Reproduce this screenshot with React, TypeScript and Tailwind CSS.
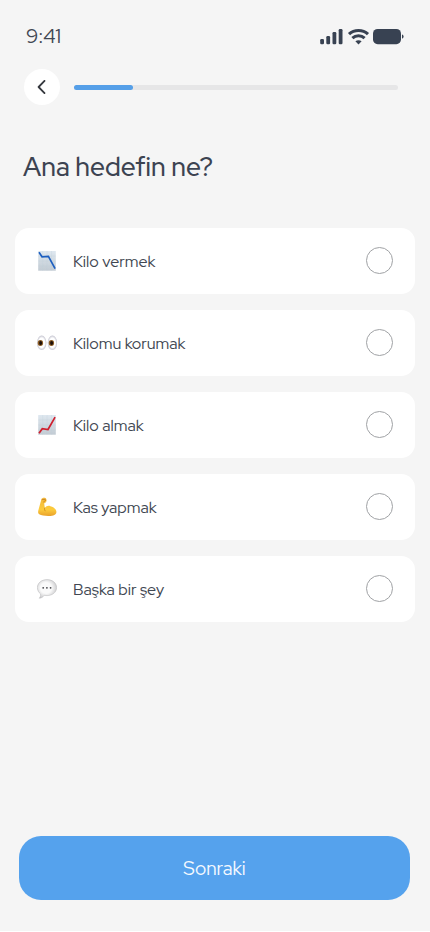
import { ReactNode } from "react";

const goals: { label: string; icon: ReactNode }[] = [
  { label: "Kilo vermek", icon: <ChartDownIcon /> },
  { label: "Kilomu korumak", icon: <EyesIcon /> },
  { label: "Kilo almak", icon: <ChartUpIcon /> },
  { label: "Kas yapmak", icon: <BicepsIcon /> },
  { label: "Başka bir şey", icon: <SpeechIcon /> },
];

function ChartBackdrop({ id }: { id: string }) {
  return (
    <>
      <defs>
        <linearGradient id={id} x1="0" y1="0" x2="0" y2="1">
          <stop offset="0" stopColor="#dfe8f0" />
          <stop offset="1" stopColor="#c2cbd3" />
        </linearGradient>
      </defs>
      <rect x="1.2" y="1" width="17.6" height="19.7" fill={`url(#${id})`} />
      <path
        d="M5.7 1v19.7M10.1 1v19.7M14.5 1v19.7M1.2 6h17.6M1.2 11h17.6M1.2 16h17.6"
        stroke="#b9cbd9"
        strokeWidth="0.4"
        opacity="0.6"
      />
    </>
  );
}

function ChartDownIcon() {
  return (
    <svg width="20" height="22" viewBox="0 0 20 22" fill="none">
      <ChartBackdrop id="chart-down" />
      <path
        d="m2 2.2 3 4.6 6.4-.5 6.7 12.4"
        stroke="#1d5fc0"
        strokeWidth="1.7"
      />
    </svg>
  );
}

function ChartUpIcon() {
  return (
    <svg width="20" height="22" viewBox="0 0 20 22" fill="none">
      <ChartBackdrop id="chart-up" />
      <path
        d="m2 19.3 3.3-4.6 5.7.8 7.1-12.3"
        stroke="#cf1f2e"
        strokeWidth="1.7"
      />
    </svg>
  );
}

function EyesIcon() {
  return (
    <svg width="20" height="22" viewBox="0 0 20 22" fill="none">
      <defs>
        <radialGradient id="eye-white">
          <stop offset="0.65" stopColor="#ffffff" />
          <stop offset="1" stopColor="#c2c2ce" />
        </radialGradient>
      </defs>
      <ellipse cx="4.7" cy="10.8" rx="4.7" ry="7.3" fill="url(#eye-white)" />
      <ellipse cx="15.4" cy="10.8" rx="4.7" ry="7.3" fill="url(#eye-white)" />
      <ellipse cx="3.4" cy="11" rx="2.7" ry="3" fill="#8a5a22" />
      <ellipse cx="14.4" cy="11" rx="2.7" ry="3" fill="#8a5a22" />
      <ellipse cx="3.6" cy="11" rx="1.5" ry="1.9" fill="#1c0f08" />
      <ellipse cx="14.6" cy="11" rx="1.5" ry="1.9" fill="#1c0f08" />
    </svg>
  );
}

function BicepsIcon() {
  return (
    <svg width="20" height="22" viewBox="0 0 20 22" fill="none">
      <defs>
        <linearGradient id="biceps" x1="0" y1="0" x2="0" y2="1">
          <stop offset="0" stopColor="#f2b83c" />
          <stop offset="0.65" stopColor="#fccb3c" />
          <stop offset="1" stopColor="#e9a22c" />
        </linearGradient>
      </defs>
      <path
        d="M4.4 3.2C5 1.7 7.1 1.3 8.5 2.1c1 .6 1.3 2 .9 3.2-.3 1-1 1.8-2.200 1.900l.6 4.800c1.500-2 3.700-2.700 5.600-1.800 2.800.4 5.900 2.900 6 5.600.1 2.900-3.100 4-7.200 4.100-4 .1-7.800-.4-10-1.700-1.200-.7-1.200-2.100-.9-3.700Z"
        fill="url(#biceps)"
      />
      <path
        d="M7.6 12c-.3 1.1 0 2 .5 2.8M5.2 3.6l3.1-.2M8.7 4.3 6.500 6"
        stroke="#bf751d"
        strokeWidth="0.7"
        strokeLinecap="round"
      />
    </svg>
  );
}

function SpeechIcon() {
  return (
    <svg width="20" height="22" viewBox="0 0 20 22" fill="none">
      <defs>
        <radialGradient id="speech" cx="0.45" cy="0.45" r="0.58">
          <stop offset="0.5" stopColor="#fafafa" />
          <stop offset="1" stopColor="#c9c9cb" />
        </radialGradient>
      </defs>
      <path
        d="M10 1.6c5.4 0 9.6 3.4 9.6 8s-4.2 8-9.6 8c-1 0-1.9-.1-2.8-.3-1.100 1.700-2.800 2.900-5 2.900 1.200-1.100 1.600-2.600 1.400-4.200C1.600 14.500.4 12.200.4 9.600.4 5 4.600 1.600 10 1.600Z"
        fill="url(#speech)"
        stroke="#b4b4b6"
        strokeWidth="0.5"
      />
      <circle cx="6.2" cy="9.8" r="0.9" fill="#45454a" />
      <circle cx="9.9" cy="9.8" r="0.9" fill="#45454a" />
      <circle cx="13.6" cy="9.8" r="0.9" fill="#45454a" />
    </svg>
  );
}

function StatusIcons() {
  return (
    <svg width="84" height="18" viewBox="0 0 84 18" fill="none">
      <g fill="#384252">
        <rect x="0.2" y="11" width="3.8" height="5.2" rx="1.2" />
        <rect x="6.3" y="8" width="3.8" height="8.2" rx="1.2" />
        <rect x="12.5" y="4" width="3.8" height="12.2" rx="1.2" />
        <rect x="18.7" y="1" width="3.8" height="15.2" rx="1.2" />
        <path d="m38.5 16.4-3.1-3.1c1.7-1.5 4.5-1.5 6.2 0Z" />
        <rect x="53" y="1" width="28" height="15.2" rx="4.6" />
        <path d="M82 6.5c1.100.3 1.600 1.100 1.600 2.100s-.5 1.800-1.600 2.100Z" />
      </g>
      <path
        d="M29 6.2c5.3-5 13.7-5 19 0M32.4 10.1c3.4-3.2 8.8-3.2 12.2 0"
        stroke="#384252"
        strokeWidth="3.1"
      />
    </svg>
  );
}

function GoalOption({ label, icon }: { label: string; icon: ReactNode }) {
  return (
    <button
      type="button"
      className="flex h-[66px] w-full items-center rounded-[14px] bg-white px-[22px] text-left"
    >
      {icon}
      <span className="mt-px ml-4 flex-1 whitespace-nowrap text-[16px] text-[#414752]">
        {label}
      </span>
      <span className="mb-px size-[27px] rounded-full border border-[#a0a2a5]" />
    </button>
  );
}

export default function App() {
  return (
    <div className="h-[932px] w-[430px] bg-white">
      <main className="flex h-[931px] flex-col bg-[#f5f5f5] font-['Red_Hat_Display','Lato',sans-serif]">
        <div className="flex h-[69px] shrink-0 items-start justify-between px-[26px] pt-[28px]">
          <span className="text-[20px] leading-[17px] text-[#414752]">
            9:41
          </span>
          <StatusIcons />
        </div>

        <div className="flex h-9 shrink-0 items-center pr-8 pl-6">
          <button
            type="button"
            aria-label="Geri"
            className="flex size-9 items-center justify-center rounded-full bg-white"
          >
            <svg width="10" height="14" viewBox="0 0 10 14" fill="none">
              <path
                d="M7.5.9 1.6 7l5.9 6.1"
                stroke="#35383e"
                strokeWidth="1.8"
                strokeLinecap="round"
                strokeLinejoin="round"
              />
            </svg>
          </button>
          <div className="ml-3.5 h-[5px] flex-1 rounded-full bg-[#e6e6e7]">
            <div className="h-full w-[59px] rounded-full bg-[#559fe8]" />
          </div>
        </div>

        <h1 className="mt-[44px] ml-[23px] text-[26.4px] leading-9 font-medium whitespace-nowrap text-[#3c4351]">
          Ana hedefin ne?
        </h1>

        <div className="mt-[43px] flex flex-col gap-4 px-[15px]">
          {goals.map((goal) => (
            <GoalOption key={goal.label} {...goal} />
          ))}
        </div>

        <button
          type="button"
          className="mt-auto mr-[20.4px] mb-[31px] ml-[19.4px] h-16 rounded-[22px] bg-[#55a2ed] pt-0.5 text-[19px] text-[#f4f9ff]"
        >
          Sonraki
        </button>
      </main>
    </div>
  );
}
